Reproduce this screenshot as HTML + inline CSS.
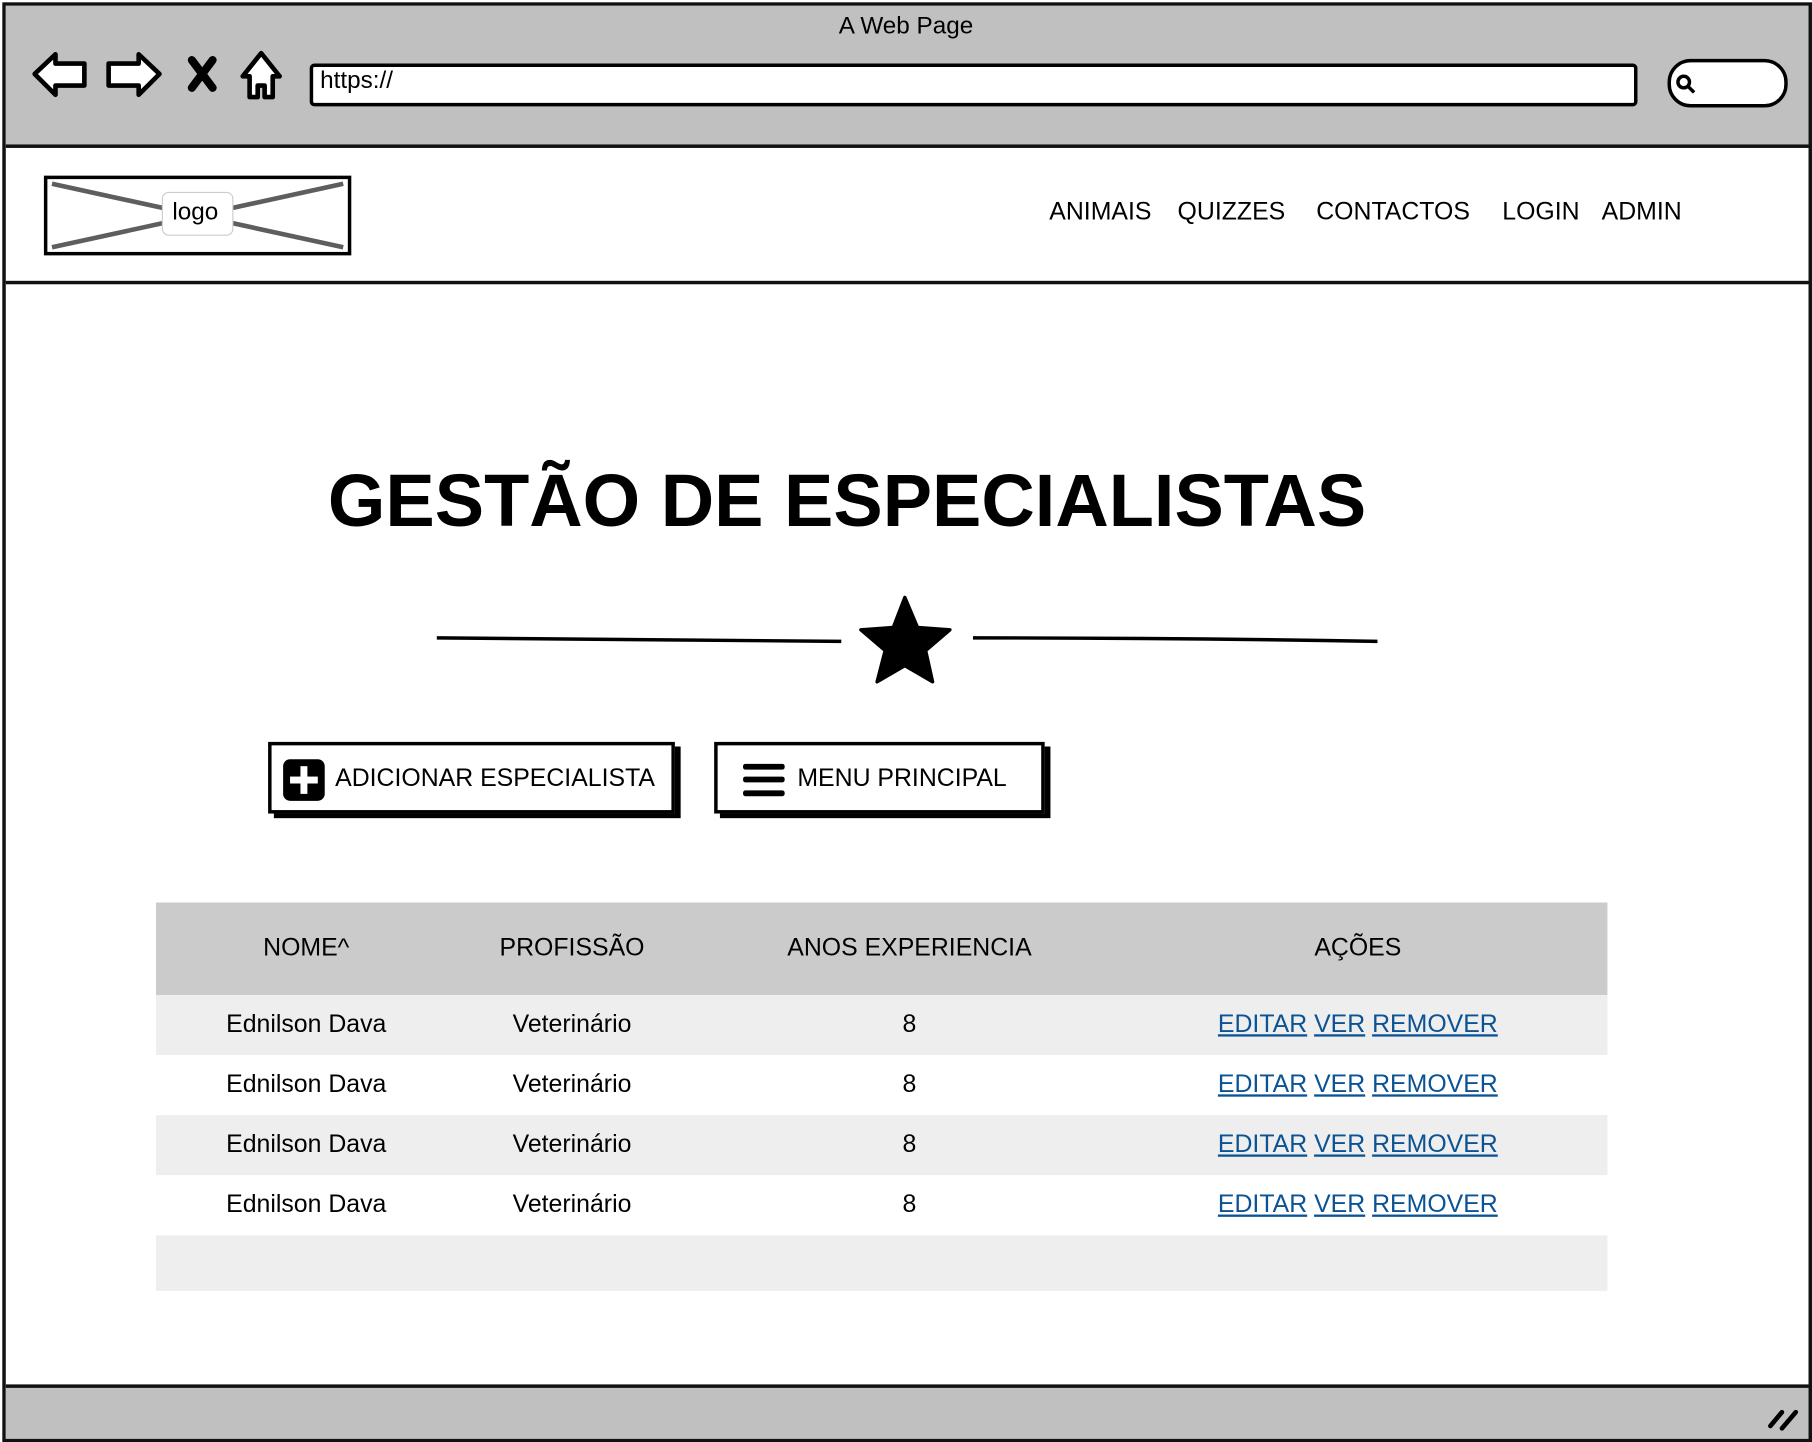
<!DOCTYPE html>
<html><head><meta charset="utf-8"><style>
html,body{margin:0;padding:0;background:#fff;overflow:hidden;width:1812px;height:1442px}
#w{position:absolute;left:0;top:0;width:1568px;height:1248px;transform:scale(1.1556);transform-origin:0 0;font-family:"Liberation Sans",sans-serif;color:#000}
.a{position:absolute}
.t{position:absolute;white-space:nowrap}
.nav{font-size:21.5px;top:171px}
.row{position:absolute;left:135px;width:1256px;height:52px}
.cell{position:absolute;font-size:21.5px;transform:translateX(-50%);white-space:nowrap}
.lk{color:#0b5394;text-decoration:underline}
.btn{position:absolute;height:62px;border:3px solid #000;background:#fff;box-shadow:5px 4px 0 #000;box-sizing:border-box}
</style></head><body><div id="w">
<div class="a" style="left:2px;top:2px;width:1560px;height:1240px;border:3px solid #111;background:#fff"></div>
<div class="a" style="left:5px;top:5px;width:1560px;height:120px;background:#c0c0c0;border-bottom:3px solid #111"></div>
<div class="t" style="left:0;width:1568px;text-align:center;top:11px;font-size:21px">A Web Page</div>
<svg class="a" style="left:20px;top:38px" width="230" height="52" viewBox="0 0 230 52">
<path d="M10 26 L28 9 L28 17 L53 17 L53 36 L28 36 L28 44 Z" fill="#fff" stroke="#000" stroke-width="4" stroke-linejoin="round"/>
<path d="M118 26 L100 9 L100 17 L74 17 L74 36 L100 36 L100 44 Z" fill="#fff" stroke="#000" stroke-width="4" stroke-linejoin="round"/>
<path d="M146 14 L164 38 M164 14 L146 38" stroke="#000" stroke-width="7" stroke-linecap="round"/>
<path d="M206 8 L222 28 L216 28 L216 46 L209 46 L209 36 L203 36 L203 46 L196 46 L196 28 L190 28 Z" fill="#fff" stroke="#000" stroke-width="4" stroke-linejoin="round"/>
</svg>
<div class="a" style="left:268px;top:55px;width:1143px;height:31px;background:#fff;border:3px solid #000;border-radius:4px"></div>
<div class="t" style="left:277px;top:58px;font-size:21px">https://</div>
<div class="a" style="left:1443px;top:51px;width:98px;height:36px;background:#fff;border:3px solid #000;border-radius:20px"></div>
<svg class="a" style="left:1448px;top:62px" width="22" height="22"><circle cx="9" cy="9" r="5" fill="none" stroke="#000" stroke-width="3"/><path d="M13 13 L18 18" stroke="#000" stroke-width="3"/></svg>
<div class="a" style="left:5px;top:243px;width:1560px;height:3px;background:#111"></div>
<div class="a" style="left:38px;top:152px;width:260px;height:63px;border:3px solid #000;background:#fff"></div>
<svg class="a" style="left:41px;top:155px" width="260" height="63"><path d="M4 4 L256 59 M4 59 L256 4" stroke="#5e5e5e" stroke-width="4"/></svg>
<div class="a" style="left:140px;top:166px;width:60px;height:36px;background:#fff;border:1px solid #ccc;border-radius:6px"></div>
<div class="t" style="left:138px;width:62px;text-align:center;top:172px;font-size:21px">logo</div>
<div class="t nav" style="left:908px">ANIMAIS</div>
<div class="t nav" style="left:1019px">QUIZZES</div>
<div class="t nav" style="left:1139px">CONTACTOS</div>
<div class="t nav" style="left:1300px">LOGIN</div>
<div class="t nav" style="left:1386px">ADMIN</div>
<div class="t" style="left:0;width:1466px;text-align:center;top:396px;font-size:64px;font-weight:bold">GESTÃO DE ESPECIALISTAS</div>
<svg class="a" style="left:370px;top:510px" width="830" height="90">
<path d="M8 42 Q180 44 358 45" stroke="#000" stroke-width="3" fill="none"/>
<path d="M472 42 Q650 42 822 45" stroke="#000" stroke-width="3" fill="none"/>
<path d="M413 7 L424 33 L452 35 L431 53 L437 80 L413 66 L389 80 L396 53 L375 35 L403 33 Z" fill="#000" stroke="#000" stroke-width="3" stroke-linejoin="round"/>
</svg>
<div class="btn" style="left:232px;top:642px;width:352px"></div>
<div class="a" style="left:245px;top:657px;width:36px;height:36px;background:#000;border-radius:6px"></div>
<div class="a" style="left:260px;top:663px;width:6px;height:24px;background:#fff"></div>
<div class="a" style="left:251px;top:672px;width:24px;height:6px;background:#fff"></div>
<div class="t" style="left:290px;top:661px;font-size:21.5px">ADICIONAR ESPECIALISTA</div>
<div class="btn" style="left:618px;top:642px;width:286px"></div>
<div class="a" style="left:643px;top:661px;width:36px;height:5px;background:#000;border-radius:2px"></div>
<div class="a" style="left:643px;top:672px;width:36px;height:5px;background:#000;border-radius:2px"></div>
<div class="a" style="left:643px;top:684px;width:36px;height:5px;background:#000;border-radius:2px"></div>
<div class="t" style="left:690px;top:661px;font-size:21.5px">MENU PRINCIPAL</div>
<div class="row" style="top:781px;height:80px;background:#cbcbcb">
<div class="cell" style="left:130px;top:27px">NOME^</div>
<div class="cell" style="left:360px;top:27px">PROFISSÃO</div>
<div class="cell" style="left:652px;top:27px">ANOS EXPERIENCIA</div>
<div class="cell" style="left:1040px;top:27px">AÇÕES</div>
</div>
<div class="row" style="top:861px;background:#eeeeee"><div class="cell" style="left:130px;top:13px">Ednilson Dava</div><div class="cell" style="left:360px;top:13px">Veterinário</div><div class="cell" style="left:652px;top:13px">8</div><div class="cell" style="left:1040px;top:13px"><span class="lk">EDITAR</span> <span class="lk">VER</span> <span class="lk">REMOVER</span></div></div>
<div class="row" style="top:913px;background:#fff"><div class="cell" style="left:130px;top:13px">Ednilson Dava</div><div class="cell" style="left:360px;top:13px">Veterinário</div><div class="cell" style="left:652px;top:13px">8</div><div class="cell" style="left:1040px;top:13px"><span class="lk">EDITAR</span> <span class="lk">VER</span> <span class="lk">REMOVER</span></div></div>
<div class="row" style="top:965px;background:#eeeeee"><div class="cell" style="left:130px;top:13px">Ednilson Dava</div><div class="cell" style="left:360px;top:13px">Veterinário</div><div class="cell" style="left:652px;top:13px">8</div><div class="cell" style="left:1040px;top:13px"><span class="lk">EDITAR</span> <span class="lk">VER</span> <span class="lk">REMOVER</span></div></div>
<div class="row" style="top:1017px;background:#fff"><div class="cell" style="left:130px;top:13px">Ednilson Dava</div><div class="cell" style="left:360px;top:13px">Veterinário</div><div class="cell" style="left:652px;top:13px">8</div><div class="cell" style="left:1040px;top:13px"><span class="lk">EDITAR</span> <span class="lk">VER</span> <span class="lk">REMOVER</span></div></div>
<div class="row" style="top:1069px;height:48px;background:#eeeeee"></div>
<div class="a" style="left:5px;top:1198px;width:1560px;height:44px;background:#c0c0c0;border-top:3px solid #111"></div>
<svg class="a" style="left:1528px;top:1212px" width="30" height="28"><path d="M4 22 L14 10 M14 24 L26 10" stroke="#000" stroke-width="4" stroke-linecap="round"/></svg>
</div></body></html>
